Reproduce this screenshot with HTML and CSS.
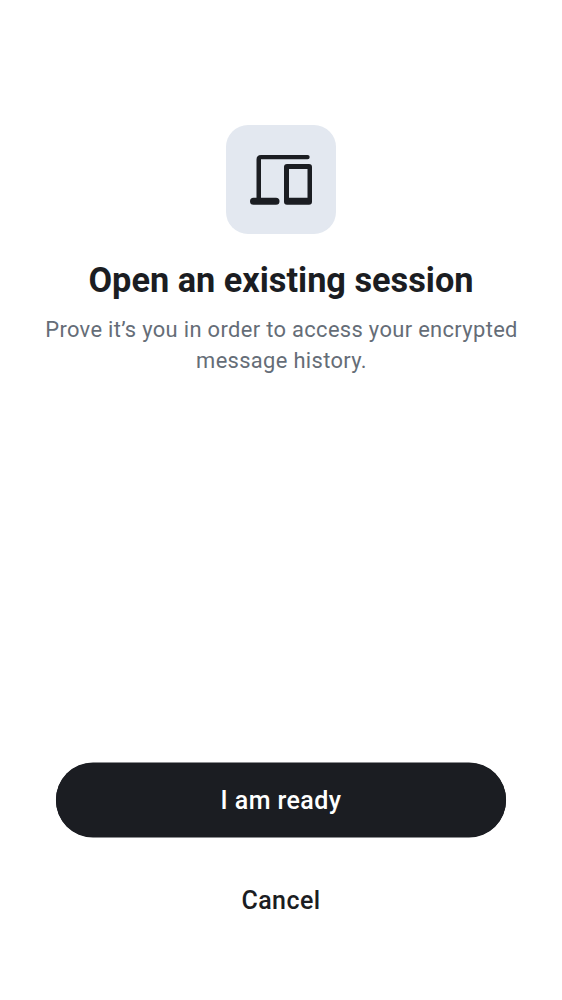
FILE: index.html
```html
<!DOCTYPE html>
<html lang="en">
<head>
<meta charset="utf-8">
<title>Open an existing session</title>
<link rel="stylesheet" href="styles.css">
</head>
<body>
<main class="screen">
  <header class="intro">
    <div class="icon-tile">
      <svg class="icon" viewBox="250 154 62 51" aria-hidden="true">
        <path d="M307.500 154.900H261Q256.500 154.900 256.500 159.400V197.700H253.500A3.500 3.500 0 0 0 253.500 204.700H276A3.500 3.500 0 0 0 276 197.700H261V159.300H307.500A2.200 2.200 0 0 0 307.500 154.900Z"/>
        <path fill-rule="evenodd" d="M287 164H309Q312 164 312 167V201.700Q312 204.700 309 204.700H287Q284 204.700 284 201.700V167Q284 164 287 164ZM289 169V197.700H307.500V169Z"/>
      </svg>
    </div>
    <h1 class="title">Open an existing session</h1>
    <p class="subtitle">Prove it’s you in order to access your encrypted<br>message history.</p>
  </header>
  <div class="actions">
    <button class="button primary">I am ready</button>
    <button class="button text">Cancel</button>
  </div>
</main>
</body>
</html>
```
FILE: styles.css
```css
body { margin: 0; background: #fff; font-family: Roboto, sans-serif; }
.screen { box-sizing: border-box; height: 1000px; padding: 125px 0 63px; display: flex; flex-direction: column; justify-content: space-between; }
.intro { display: flex; flex-direction: column; align-items: center; text-align: center; }
.icon-tile { width: 110px; height: 109px; border-radius: 22px; background: #e3e8f0; display: flex; align-items: center; justify-content: center; }
.icon { width: 62px; height: 51px; fill: #1b1d22; }
.title { margin: 26px 0 0; font-size: 34.300px; line-height: 40px; font-weight: 700; color: #1b1d22; white-space: nowrap; }
.subtitle { margin: 14px 0 0; padding-left: 1px; font-size: 21.900px; line-height: 31px; letter-spacing: 0.340px; color: #656d77; white-space: nowrap; }
.actions { display: flex; flex-direction: column; gap: 26px; padding: 0 56px; }
.button { height: 74px; border: 0; border-radius: 37px; padding: 0; font: 500 25px Roboto, sans-serif; letter-spacing: 0.420px; }
.primary { background: #1b1d22; color: #fff; box-shadow: 0 0.500px #1b1d22, 0 -0.500px #1b1d22; }
.text { background: transparent; color: #1b1d22; }
```
